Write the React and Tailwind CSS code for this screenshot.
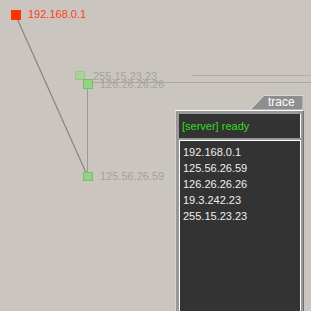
import React from 'react';

const nodes = [
  { x: 11, y: 10, w: 9, h: 9, fill: '#ff3300', stroke: '#ff3300' },
  { x: 75, y: 71, w: 9, h: 8, fill: '#a9d29b', stroke: '#9fbf95' },
  { x: 83, y: 79, w: 9, h: 9, fill: '#8fd67e', stroke: '#7fb874' },
  { x: 83, y: 172, w: 9, h: 8, fill: '#8fd67e', stroke: '#7fb874' },
];

const labels = [
  { text: '192.168.0.1', x: 28, y: 8, color: 'text-[#ff3b1c]' },
  { text: '255.15.23.23', x: 93, y: 70, color: 'text-[#a5a19c]' },
  { text: '126.26.26.26', x: 100, y: 78, color: 'text-[#a5a19c]' },
  { text: '125.56.26.59', x: 100, y: 170, color: 'text-[#a5a19c]' },
];

const trace = ['192.168.0.1', '125.56.26.59', '126.26.26.26', '19.3.242.23', '255.15.23.23'];

export default function App() {
  return (
    <div className="relative w-[311px] h-[311px] overflow-hidden bg-[#cac6bf] font-['Liberation_Sans',Arial,sans-serif]">
      <svg className="absolute inset-0" width="311" height="311">
        <line x1="15.5" y1="15" x2="87.5" y2="176" stroke="#8b8884" strokeWidth="1.3" />
        <line x1="87.5" y1="84" x2="87.5" y2="176" stroke="#9d9995" strokeWidth="1" />
        <line x1="87" y1="82.5" x2="311" y2="82.5" stroke="#aaa6a0" strokeWidth="1" />
        <line x1="192" y1="75.5" x2="311" y2="75.5" stroke="#b0aca6" strokeWidth="1" />
        {nodes.map((n, i) => (
          <rect key={i} x={n.x + 0.5} y={n.y + 0.5} width={n.w} height={n.h} fill={n.fill} stroke={n.stroke} />
        ))}
      </svg>

      {labels.map((l) => (
        <div key={l.text} className={`absolute text-[11px] leading-[13px] ${l.color}`} style={{ left: l.x, top: l.y }}>
          {l.text}
        </div>
      ))}

      <div className="absolute left-[175px] top-[95px] w-[129px] h-[216px] flex flex-col">
        <div className="flex justify-end">
          <div className="relative w-[53px] h-[15px] mr-[1px]">
            <svg className="absolute inset-0" width="53" height="15">
              <polygon points="0,15 14,0.5 53,0.5 53,15" fill="#8e8e8e" stroke="#d8d8d8" strokeWidth="1" />
            </svg>
            <div className="relative pl-[18px] text-[12px] leading-[15px] text-white">trace</div>
          </div>
        </div>
        <div className="flex-1 flex flex-col border-l border-l-[#d6d6d6] border-t border-t-white border-r border-r-[#707070] bg-[#999999] pl-[3px] pr-[2px] pt-[3px]">
          <div className="h-[24px] bg-[#333333] border-r border-r-white flex items-center pl-[3px] text-[11px] text-[#33dd22]">
            [server] ready
          </div>
          <div className="mt-[2px] flex-1 bg-[#333333] border border-white border-b-0 pl-[3px] pt-[3px]">
            {trace.map((t) => (
              <div key={t} className="text-[11px] leading-[16px] text-[#eeeeee]">{t}</div>
            ))}
          </div>
        </div>
      </div>
    </div>
  );
}
